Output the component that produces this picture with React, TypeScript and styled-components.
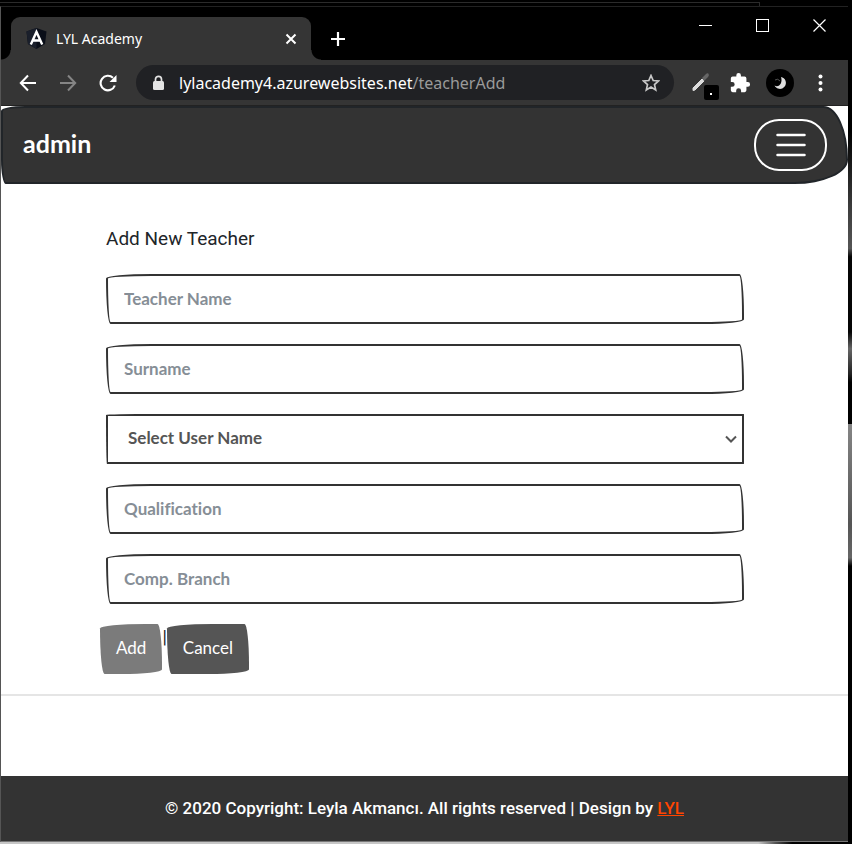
import React from "react";
import styled, { createGlobalStyle, css } from "styled-components";

const GlobalStyle = createGlobalStyle`
  *, *::before, *::after { box-sizing: border-box; }
  body { margin: 0; background: #000; font-family: Roboto, "Liberation Sans", sans-serif; }
  button, input, select { font: inherit; margin: 0; }
  button { cursor: pointer; }
`;

const uiFont = `"Noto Sans", "Open Sans", sans-serif`;
const sketchFont = `Lato, sans-serif`;
const sketchRadius = "255px 25px 225px 25px / 25px 225px 25px 255px";

const Desktop = styled.div`
  min-height: 100vh;
  display: grid;
  grid-template-columns: minmax(0, 1fr) 4px;
  grid-template-rows: 6px 1fr 2px;
`;
const DesktopTop = styled.div`
  grid-column: 1 / -1;
  padding-top: 2px;
  &::before {
    content: "";
    display: block;
    width: 89.2%;
    height: 4px;
    border: 1px solid #2b2b2b;
    border-width: 1px 1px 0 0;
  }
`;
const DesktopSide = styled.div`
  background: linear-gradient(#000 0 15%, #3c3c3c 24%, #555 29%, #050505 30% 39%, #666 41%, #222 44%, #000 45% 50%, #858585 50%, #555 62%, #666 66%, #000 67%);
`;
const DesktopBottom = styled.div`
  grid-column: 1 / -1;
  background: linear-gradient(90deg, #c6c6c6 0 89%, #555 91%, #000 93%);
`;
const Window = styled.div`
  display: flex;
  flex-direction: column;
  min-width: 0;
  border: 1px solid #222;
  border-width: 1px 0 1px 1px;
  border-left-color: #555;
  border-bottom-color: #777;
`;

const TabStrip = styled.div`
  display: flex;
  height: 53px;
  padding-left: 10px;
  background: #000;
`;
const Tab = styled.div`
  position: relative;
  display: flex;
  align-items: center;
  gap: 9px;
  width: 300px;
  margin-top: 10px;
  padding: 0 12px 0 15px;
  border-radius: 9px 9px 0 0;
  background: #353535;
  color: #fff;
  font: 14px/20px ${uiFont};
  &::before, &::after {
    content: "";
    position: absolute;
    bottom: 0;
    width: 10px;
    height: 10px;
  }
  &::before { right: 100%; background: radial-gradient(circle at 0 0, #000 9px, #353535 10px); }
  &::after { left: 100%; background: radial-gradient(circle at 100% 0, #000 9px, #353535 10px); }
`;
const TabTitle = styled.span`flex: 1;`;
const IconButton = styled.button<{ $w?: number }>`
  display: flex;
  align-items: center;
  justify-content: center;
  width: ${(p) => p.$w ?? 40}px;
  height: 32px;
  padding: 0;
  border: 0;
  background: none;
  color: #fff;
  svg { display: block; flex: none; }
`;
const NewTab = styled(IconButton)`margin: 16px 0 0 10px;`;
const WindowControls = styled.div`
  display: flex;
  margin-left: auto;
  padding-top: 2px;
`;

const Toolbar = styled.div`
  display: flex;
  align-items: center;
  height: 46px;
  padding: 0 8px 0 7px;
  background: #353535;
  border-bottom: 1px solid #222;
`;
const Address = styled.div`
  display: flex;
  align-items: center;
  flex: 1;
  min-width: 0;
  height: 35px;
  margin: 0 8px;
  padding: 0 3px 0 16px;
  border-radius: 18px;
  background: #202124;
`;
const Url = styled.a`
  flex: 1;
  margin-left: 15px;
  color: #9a9a9a;
  font: 16px/24px ${uiFont};
  text-decoration: none;
  white-space: nowrap;
`;
const Host = styled.span`color: #fff;`;

const Page = styled.div`
  display: flex;
  flex: 1;
  flex-direction: column;
  background: #fff;
  color: #212529;
`;
const Navbar = styled.nav`
  display: flex;
  align-items: center;
  justify-content: space-between;
  height: 78px;
  padding: 0 19px 0 20px;
  border: 2px solid #212529;
  border-radius: 25px 25px 55px 5px / 5px 55px 25px 25px;
  background: #333;
`;
const Brand = styled.a`
  padding-bottom: 4px;
  color: #fff;
  font: 700 25px/36px Lato, sans-serif;
  text-decoration: none;
`;
const Toggler = styled.button`
  display: flex;
  align-items: center;
  justify-content: center;
  width: 73px;
  height: 52px;
  padding: 0;
  border: 2px solid #fff;
  border-radius: 25px;
  background: none;
`;
const Main = styled.main`
  flex: 1;
  padding-top: 44px;
`;
const FormBody = styled.div`
  display: grid;
  gap: 20px;
  padding: 0 104px 0 105px;
`;
const Title = styled.h1`
  margin: 0 0 4px;
  font: 400 19px/22px Roboto, sans-serif;
`;
const fieldStyle = css`
  display: block;
  width: 100%;
  height: 50px;
  border: 2px solid #333;
  background: #fff;
  color: #555;
  font: 700 17px/30px ${sketchFont};
  font-variant-ligatures: none;
`;
const TextField = styled.input`
  ${fieldStyle}
  padding: 0 16px 2px;
  border-radius: ${sketchRadius};
  &::placeholder { color: #868e96; opacity: 1; }
`;
const SelectWrap = styled.div`
  position: relative;
  svg { position: absolute; right: 7px; top: 21px; pointer-events: none; }
`;
const Select = styled.select`
  ${fieldStyle}
  padding: 0 20px 2px;
  appearance: none;
  border-radius: 255px 5px 5px 5px / 5px 5px 5px 255px;
`;
const Actions = styled.div`
  display: flex;
  padding: 20px 0 20px 99px;
  font: 18px/26px Roboto, sans-serif;
`;
const Button = styled.button<{ $dim?: boolean }>`
  height: 50px;
  padding: 0 16px 2px;
  border: 0;
  border-radius: ${sketchRadius};
  background: ${(p) => (p.$dim ? "#7b7b7b" : "#555")};
  color: #fff;
  font: 17px/30px ${sketchFont};
`;
const Rule = styled.hr`
  margin: 0;
  border: 0;
  border-top: 2px solid #e5e5e5;
`;
const Footer = styled.footer`
  padding: 20px;
  background: #333;
  color: #fff;
  font: 500 17px/25px Roboto, sans-serif;
  text-align: center;
`;
const FooterLink = styled.a`color: #ff4500;`;

const Field = ({ label }: { label: string }) => (
  <TextField type="text" aria-label={label} placeholder={label} />
);

export default function App() {
  return (
    <>
      <GlobalStyle />
      <Desktop>
        <DesktopTop />
        <Window>
          <TabStrip>
            <Tab>
              <svg width="21" height="21" viewBox="0 0 21 21">
                <path d="M10.5 0 20.5 3.5 19 16 10.5 21 2 16 .5 3.5Z" fill="#0a0e18" />
                <path d="M10.5 0v21L2 16 .5 3.5Z" fill="#1a1f2b" />
                <path d="M4.8 16.5 10.5 4l5.7 12.5M7 12.5h7" fill="none" stroke="#fff" strokeWidth="2.4" />
              </svg>
              <TabTitle>LYL Academy</TabTitle>
              <IconButton $w={16} aria-label="Close tab">
                <svg width="12" height="12" viewBox="0 0 12 12"><path d="m1.5 1.5 9 9m0-9-9 9" stroke="#fff" strokeWidth="2" /></svg>
              </IconButton>
            </Tab>
            <NewTab $w={34} aria-label="New tab">
              <svg width="16" height="16"><path d="M8 1v14M1 8h14" stroke="#fff" strokeWidth="2.2" /></svg>
            </NewTab>
            <WindowControls>
              <IconButton $w={57} aria-label="Minimize"><svg width="13" height="13"><path d="M0 6.5h13" stroke="#fff" /></svg></IconButton>
              <IconButton $w={57} aria-label="Maximize"><svg width="13" height="13"><rect x=".5" y=".5" width="12" height="12" fill="none" stroke="#fff" /></svg></IconButton>
              <IconButton $w={57} aria-label="Close window"><svg width="13" height="13"><path d="m.5.5 12 12m0-12-12 12" stroke="#fff" strokeWidth="1.2" /></svg></IconButton>
            </WindowControls>
          </TabStrip>

          <Toolbar>
            <IconButton aria-label="Back">
              <svg width="18" height="18" viewBox="0 0 18 18" fill="none" stroke="#fff" strokeWidth="2"><path d="M17 9H2m7-7.5L1.8 9 9 16.5" /></svg>
            </IconButton>
            <IconButton aria-label="Forward">
              <svg width="18" height="18" viewBox="0 0 18 18" fill="none" stroke="#858585" strokeWidth="2"><path d="M1 9h15M9 1.5 16.2 9 9 16.5" /></svg>
            </IconButton>
            <IconButton aria-label="Reload">
              <svg width="18" height="18" viewBox="0 0 18 18"><path d="M15.8 11.5A7.3 7.3 0 1 1 14 3.8" fill="none" stroke="#fff" strokeWidth="2.1" /><path d="M17.5 1v7h-7Z" fill="#fff" /></svg>
            </IconButton>
            <Address>
              <svg width="12" height="16" viewBox="0 0 12 16"><rect x="1" y="6" width="11" height="9" rx="1.5" fill="#e4e4e4" /><path d="M3.5 7V4.3a3 3 0 0 1 6 0V7" fill="none" stroke="#e4e4e4" strokeWidth="1.7" /></svg>
              <Url href="#"><Host>lylacademy4.azurewebsites.net</Host>/teacherAdd</Url>
              <IconButton aria-label="Bookmark">
                <svg width="18" height="18" viewBox="0 0 18 18"><path d="m9 1.5 2.2 5 5.3.5-4 3.6 1.2 5.3L9 13.1l-4.7 2.8 1.2-5.3-4-3.6 5.3-.5Z" fill="none" stroke="#c8c8c8" strokeWidth="1.7" /></svg>
              </IconButton>
            </Address>
            <IconButton $w={38} aria-label="Color picker">
              <svg width="38" height="34" viewBox="0 0 38 34">
                <path d="m11 22 9-9 2 2-9 9-2 .5Z" fill="#ddd" stroke="#ddd" />
                <path d="m20 12 4-4c2-2 4 1 2 3l-4 4Z" fill="#666" />
                <rect x="22" y="19" width="15" height="15" rx="2" fill="#000" />
                <rect x="28" y="27" width="2" height="2" fill="#fff" />
              </svg>
            </IconButton>
            <IconButton aria-label="Extensions">
              <svg width="22" height="22" viewBox="0 0 24 24"><path fill="#fff" d="M20.5 11H19V7a2 2 0 0 0-2-2h-4V3.5a2.5 2.5 0 0 0-5 0V5H4a2 2 0 0 0-2 2v3.8h1.5a2.7 2.7 0 0 1 0 5.4H2V20a2 2 0 0 0 2 2h3.8v-1.5a2.7 2.7 0 0 1 5.4 0V22H17a2 2 0 0 0 2-2v-4h1.5a2.5 2.5 0 0 0 0-5Z" /></svg>
            </IconButton>
            <IconButton aria-label="Profile">
              <svg width="28" height="28" viewBox="0 0 28 28"><circle cx="14" cy="14" r="14" /><path d="M15 8a6 6 0 1 1-6.5 8.5C13 19 17 14 15 8Z" fill="#ddd" /><path d="M9 11q3-2 5 1" stroke="#555" fill="none" /></svg>
            </IconButton>
            <IconButton aria-label="Menu">
              <svg width="5" height="18" viewBox="0 0 5 18" fill="#fff"><circle cx="2.5" cy="2.5" r="2" /><circle cx="2.5" cy="9" r="2" /><circle cx="2.5" cy="15.5" r="2" /></svg>
            </IconButton>
          </Toolbar>

          <Page>
            <Navbar>
              <Brand href="#">admin</Brand>
              <Toggler aria-label="Toggle navigation">
                <svg width="30" height="26" viewBox="0 0 30 26"><path d="M1.5 3h27m-27 10h27m-27 10h27" stroke="#fff" strokeWidth="2.5" strokeLinecap="round" /></svg>
              </Toggler>
            </Navbar>
            <Main>
              <form>
                <FormBody>
                  <Title>Add New Teacher</Title>
                  <Field label="Teacher Name" />
                  <Field label="Surname" />
                  <SelectWrap>
                    <Select aria-label="User name"><option>Select User Name</option></Select>
                    <svg width="12" height="9" viewBox="0 0 12 9"><path d="m1 1.5 5 5 5-5" fill="none" stroke="#555" strokeWidth="2" /></svg>
                  </SelectWrap>
                  <Field label="Qualification" />
                  <Field label="Comp. Branch" />
                </FormBody>
                <Actions>
                  <Button type="button" $dim>Add</Button>|<Button type="button">Cancel</Button>
                </Actions>
              </form>
              <Rule />
            </Main>
            <Footer>
              © 2020 Copyright: Leyla Akmancı. All rights reserved | Design by <FooterLink href="#">LYL</FooterLink>
            </Footer>
          </Page>
        </Window>
        <DesktopSide />
        <DesktopBottom />
      </Desktop>
    </>
  );
}
